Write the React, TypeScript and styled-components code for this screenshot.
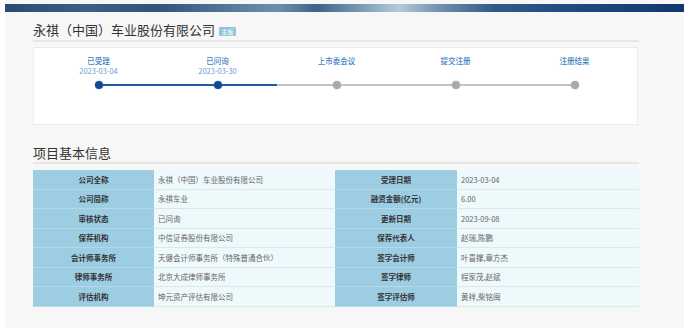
import React from 'react';
import styled, { createGlobalStyle } from 'styled-components';

type StepState = 'done' | 'todo';

interface StepItem {
	label: string
	date?: string
	state: StepState
	left?: StepState
	right?: StepState
}

const steps: StepItem[] = [
	{ label: '已受理', date: '2023-03-04', state: 'done', right: 'done' },
	{ label: '已问询', date: '2023-03-30', state: 'done', left: 'done', right: 'done' },
	{ label: '上市委会议', state: 'todo', left: 'todo', right: 'todo' },
	{ label: '提交注册', state: 'todo', left: 'todo', right: 'todo' },
	{ label: '注册结果', state: 'todo', left: 'todo' },
];

const info: [string, string, string, string][] = [
	['公司全称', '永祺（中国）车业股份有限公司', '受理日期', '2023-03-04'],
	['公司简称', '永祺车业', '融资金额(亿元)', '6.00'],
	['审核状态', '已问询', '更新日期', '2023-09-08'],
	['保荐机构', '中信证券股份有限公司', '保荐代表人', '赵瑞,陈鹏'],
	['会计师事务所', '天健会计师事务所（特殊普通合伙）', '签字会计师', '叶喜撑,章方杰'],
	['律师事务所', '北京大成律师事务所', '签字律师', '程家茂,赵斌'],
	['评估机构', '坤元资产评估有限公司', '签字评估师', '黄祥,柴铭闽'],
];

const App = () => {
	return (
		<>
			<GlobalStyle />
			<Page>
				<Banner />
				<Content>
					<TitleRow>
						<Title>永祺（中国）车业股份有限公司</Title>
						<Badge>主板</Badge>
					</TitleRow>
					<Divider />

					<Card>
						{steps.map((s) => (
							<Step key={s.label}>
								<StepLabel>{s.label}</StepLabel>
								<StepDate>{s.date || ''}</StepDate>
								<Track>
									<Segment $state={s.left} />
									<Dot $state={s.state} />
									<Segment $state={s.right} />
								</Track>
							</Step>
						))}
					</Card>

					<SectionTitle>项目基本信息</SectionTitle>
					<Divider />

					<Table>
						{info.map((row) => (
							<React.Fragment key={row[0]}>
								<LabelCell>{row[0]}</LabelCell>
								<ValueCell>{row[1]}</ValueCell>
								<LabelCell>{row[2]}</LabelCell>
								<ValueCell>{row[3]}</ValueCell>
							</React.Fragment>
						))}
					</Table>
				</Content>
			</Page>
		</>
	)
}

const GlobalStyle = createGlobalStyle`
	body {
		margin: 0;
		background: #ffffff;
		font-family: "Noto Sans CJK SC", "Noto Sans", sans-serif;
	}
`;

const Page = styled.div`
	margin-left: 5px;
	width: 679px;
	height: 328px;
	padding-top: 4px;
	box-sizing: border-box;
	background: #f7f7f7;
	overflow: hidden;
`;

const Banner = styled.div`
	height: 8px;
	background: linear-gradient(90deg,
		#2a4a72 0%, #3c5f86 12%, #2f5379 22%, #4f7597 32%,
		#6d8fab 40%, #3d6487 46%, #8aa9c1 54%, #b7cad8 58%,
		#6f90ad 64%, #2f5a88 72%, #1f4a80 84%, #12376e 100%);
`;

const Content = styled.div`
	width: 606px;
	margin-left: 28px;
`;

const TitleRow = styled.div`
	display: flex;
	align-items: center;
	gap: 4px;
	height: 20px;
	padding-top: 8px;
`;

const Title = styled.div`
	font-size: 13px;
	line-height: 20px;
	color: #333;
`;

const Badge = styled.span`
	display: inline-flex;
	align-items: center;
	justify-content: center;
	width: 17px;
	height: 9px;
	margin-top: 2px;
	border-radius: 1px;
	background: #92c4da;
	color: #fff;
	font-size: 6px;
	line-height: 9px;
`;

const Divider = styled.div`
	height: 2px;
	background: #e6e6e6;
`;

const Card = styled.div`
	display: grid;
	grid-template-columns: repeat(5, 119px);
	margin-top: 5px;
	width: 605px;
	height: 78px;
	padding: 7px 5px 0;
	box-sizing: border-box;
	background: #fff;
	border: 1px solid #ececec;
`;

const Step = styled.div`
	display: flex;
	flex-direction: column;
	align-items: center;
`;

const StepLabel = styled.div`
	font-size: 7.5px;
	line-height: 11px;
	font-weight: 500;
	color: #3f7fc4;
`;

const StepDate = styled.div`
	font-size: 7.5px;
	line-height: 10px;
	height: 10px;
	color: #6f9bcf;
`;

const Track = styled.div`
	display: flex;
	align-items: center;
	width: 100%;
	margin-top: 5px;
`;

const Segment = styled.div<{ $state?: StepState }>`
	flex: 1;
	height: 2px;
	background: ${({ $state }) => $state === 'done' ? '#1d5c9e' : $state === 'todo' ? '#c4c4c4' : 'transparent'};
`;

const Dot = styled.div<{ $state: StepState }>`
	width: 8px;
	height: 8px;
	border-radius: 50%;
	background: ${({ $state }) => $state === 'done' ? '#0d4a8f' : '#a9a9a9'};
	box-shadow: 0 0 2px ${({ $state }) => $state === 'done' ? 'rgba(13,74,143,.4)' : 'rgba(0,0,0,.2)'};
`;

const SectionTitle = styled.div`
	margin-top: 19px;
	margin-bottom: 1px;
	font-size: 13px;
	line-height: 17px;
	color: #333;
`;

const Table = styled.div`
	display: grid;
	grid-template-columns: 121px 181px 122px 182px;
	grid-auto-rows: 19.5px;
	margin-top: 6px;
`;

const LabelCell = styled.div`
	display: flex;
	align-items: center;
	justify-content: center;
	background: #9dcde3;
	border-bottom: 1px solid #b3d9ea;
	font-size: 7.5px;
	font-weight: 700;
	color: #333;
`;

const ValueCell = styled.div`
	display: flex;
	align-items: center;
	padding-left: 4px;
	background: #eef9fc;
	border-bottom: 1px solid #dbe9ee;
	font-size: 7.5px;
	color: #666;
`;

export default App;
